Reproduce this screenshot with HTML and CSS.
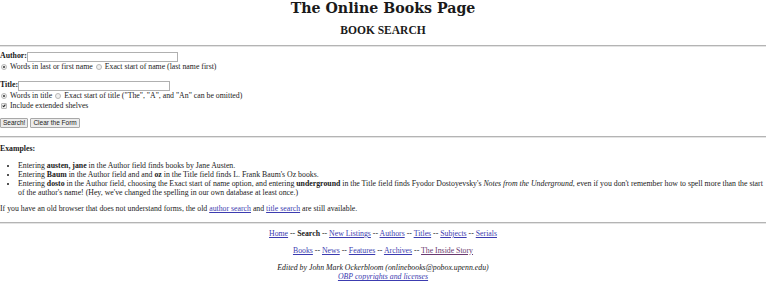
FILE: index.html
```html
<!DOCTYPE html>
<html>
<head>
<meta charset="utf-8">
<title>The Online Books Page: Book Search</title>
<link rel="stylesheet" href="styles.css">
</head>
<body>
<h1 class="site-title">The Online Books Page</h1>
<h2 class="page-title">BOOK SEARCH</h2>
<hr class="rule">
<form class="search-form">
  <div class="field-row">
    <label class="field-label" for="author">Author:</label>
    <input class="text-input author-input" type="text" id="author">
  </div>
  <div class="option-row">
    <input class="radio" type="radio" name="amode" checked><span class="opt-text">Words in last or first name</span>
    <input class="radio" type="radio" name="amode"><span class="opt-text">Exact start of name (last name first)</span>
  </div>
  <div class="field-row title-row">
    <label class="field-label" for="title">Title:</label>
    <input class="text-input title-input" type="text" id="title">
  </div>
  <div class="option-row">
    <input class="radio" type="radio" name="tmode" checked><span class="opt-text">Words in title</span>
    <input class="radio" type="radio" name="tmode"><span class="opt-text">Exact start of title ("The", "A", and "An" can be omitted)</span>
  </div>
  <div class="option-row">
    <input class="check" type="checkbox" checked><span class="opt-text">Include extended shelves</span>
  </div>
  <div class="button-row">
    <button class="btn" type="button">Search!</button>
    <button class="btn" type="button">Clear the Form</button>
  </div>
</form>
<hr class="rule">
<p class="examples-head"><b>Examples:</b></p>
<ul class="examples">
  <li>Entering <b>austen, jane</b> in the Author field finds books by Jane Austen.</li>
  <li>Entering <b>Baum</b> in the Author field and and <b>oz</b> in the Title field finds L. Frank Baum's Oz books.</li>
  <li>Entering <b>dosto</b> in the Author field, choosing the Exact start of name option, and entering <b>underground</b> in the Title field finds Fyodor Dostoyevsky's <i>Notes from the Underground</i>, even if you don't remember how to spell more than the start of the author's name! (Hey, we've changed the spelling in our own database at least once.)</li>
</ul>
<p class="old-browser">If you have an old browser that does not understand forms, the old <a href="#">author search</a> and <a href="#">title search</a> are still available.</p>
<hr class="rule">
<div class="footer">
  <p class="nav"><a href="#">Home</a> -- <b>Search</b> -- <a href="#">New Listings</a> -- <a href="#">Authors</a> -- <a href="#">Titles</a> -- <a href="#">Subjects</a> -- <a href="#">Serials</a></p>
  <p class="nav"><a href="#">Books</a> -- <a href="#">News</a> -- <a href="#">Features</a> -- <a href="#">Archives</a> -- <a class="visited" href="#">The Inside Story</a></p>
  <address class="credit">Edited by John Mark Ockerbloom (onlinebooks@pobox.upenn.edu)<br><a href="#">OBP copyrights and licenses</a></address>
</div>
</body>
</html>
```

FILE: styles.css
```css
html, body {
  margin: 0;
  padding: 0;
  background: #fff;
}
body {
  font-family: "Liberation Serif", "Times New Roman", serif;
  font-size: 7.8px;
  line-height: 8.7px;
  color: #1a1a1a;
  padding-right: 2px;
}
a {
  color: #3c3cb0;
  text-decoration: underline;
}
a.visited {
  color: #6a3a70;
}
.site-title {
  font-family: "DejaVu Serif", serif;
  font-size: 14.2px;
  line-height: 16px;
  font-weight: bold;
  text-align: center;
  margin: 0;
}
.page-title {
  font-size: 11.5px;
  line-height: 13px;
  font-weight: bold;
  text-align: center;
  margin: 8px 0 0 0;
}
.rule {
  border: 0;
  border-top: 1px solid #b4b4b4;
  border-bottom: 1px solid #e4e4e4;
  height: 0;
  margin: 8px 0 0 0;
}
.search-form {
  margin: 4px 0 0 0;
}
.field-row {
  display: flex;
  align-items: center;
  height: 11px;
}
.title-row {
  margin-top: 8px;
}
.field-label {
  font-weight: bold;
}
.text-input {
  box-sizing: border-box;
  height: 10px;
  border: 1px solid #b0b0b0;
  padding: 0;
  margin: 0;
  background: #fff;
}
.author-input {
  width: 151px;
}
.title-input {
  width: 152px;
}
.option-row {
  display: flex;
  align-items: center;
  height: 10px;
}
.radio, .check {
  appearance: none;
  -webkit-appearance: none;
  box-sizing: border-box;
  width: 6px;
  height: 6px;
  margin: 0 3px 0 1px;
  border: 1px solid #b8b8b8;
  background: #f0f0f0;
  position: relative;
}
.radio {
  border-radius: 50%;
}
.radio + .opt-text + .radio {
  margin-left: 3px;
}
.radio:checked::after {
  content: "";
  position: absolute;
  left: 1px;
  top: 1px;
  width: 2px;
  height: 2px;
  border-radius: 50%;
  background: #333;
}
.check {
  border-radius: 1px;
}
.check:checked::after {
  content: "";
  position: absolute;
  left: 1px;
  top: 0;
  width: 1px;
  height: 2px;
  border: solid #222;
  border-width: 0 1px 1px 0;
  transform: rotate(40deg);
}
.button-row {
  display: flex;
  gap: 2px;
  margin-top: 7px;
}
.btn {
  font-family: "Liberation Sans", Arial, sans-serif;
  font-size: 6.5px;
  line-height: 8px;
  height: 10px;
  padding: 0 2px;
  margin: 0;
  border: 1px solid #a8a8a8;
  background: #ececec;
  color: #222;
  border-radius: 1px;
}
.examples-head {
  margin: 7px 0 0 0;
}
.examples {
  margin: 7.5px 0 0 0;
  padding-left: 18px;
  line-height: 9px;
}
.old-browser {
  margin: 8px 0 0 0;
}
.footer {
  text-align: center;
  margin-top: 6px;
}
.nav {
  margin: 0 0 8px 0;
}
.credit {
  margin: 0;
  font-style: italic;
  line-height: 9px;
}
```
